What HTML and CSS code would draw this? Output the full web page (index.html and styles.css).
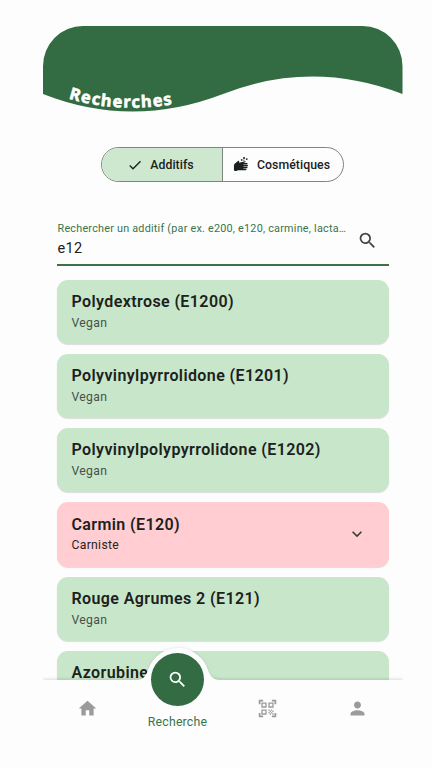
FILE: index.html
```html
<!DOCTYPE html>
<html lang="fr">
<head>
<meta charset="utf-8">
<title>Recherches</title>
<link rel="stylesheet" href="styles.css">
</head>
<body>
<main class="phone">
  <svg class="header" viewBox="0 0 360 94" role="img" aria-label="Recherches">
    <path class="wave" d="M0 68V40A40 40 0 0 1 40 0H319.500A40 40 0 0 1 359.500 40V68Q269 33 180 68Q89 103 0 68Z"/>
    <path id="title-curve" fill="none" d="M25.500 72.500Q77 88.500 140 76.500"/>
    <text class="title" textLength="105"><textPath href="#title-curve">Recherches</textPath></text>
  </svg>

  <div class="segments">
    <button class="segment selected">
      <svg class="check" viewBox="0 0 24 24"><path d="M9 16.170 4.830 12l-1.420 1.410L9 19 21 7l-1.410-1.410z"/></svg>
      <span>Additifs</span>
    </button>
    <button class="segment">
      <svg class="hands" viewBox="0 0 18 18"><path d="M1.800 8.100 5.300 5.300Q6.500 4.500 6.600 6L6.400 7.100 12.700 5.500Q14 5.500 13.200 6.700L10.800 7.500H15Q16.200 8.100 15 8.900H11V9.400H15.500Q16.600 10.100 15.500 10.900H11V11.400H15Q16 12.100 15 12.900H11V13.400H13.800Q14.800 14.200 13.800 15H5.500Q4 15.400 3.200 16H1.800Q1 15.600 1 14.500V10Q1 8.700 1.800 8.100Z"/><circle cx="11.700" cy="2.200" r="1.100"/><circle cx="9.200" cy="4.200" r=".9"/><circle cx="14.500" cy="3.300" r="1"/><circle cx="11.500" cy="4.400" r=".6"/></svg>
      <span>Cosmétiques</span>
    </button>
  </div>

  <label class="search">
    <span class="field">
      <span class="hint">Rechercher un additif (par ex. e200, e120, carmine, lacta…</span>
      <span class="value">e12</span>
    </span>
    <svg class="search-icon" viewBox="0 0 24 24"><path d="M15.500 14h-.79l-.28-.27A6.471 6.471 0 0 0 16 9.500 6.500 6.500 0 1 0 9.500 16c1.610 0 3.090-.59 4.230-1.570l.27.28v.79l5 4.990L20.490 19zm-6 0C7.010 14 5 11.990 5 9.500S7.010 5 9.500 5 14 7.010 14 9.500 11.990 14 9.500 14z"/></svg>
  </label>

  <section class="list">
    <article class="card"><h2>Polydextrose (E1200)</h2><p>Vegan</p></article>
    <article class="card"><h2>Polyvinylpyrrolidone (E1201)</h2><p>Vegan</p></article>
    <article class="card"><h2>Polyvinylpolypyrrolidone (E1202)</h2><p>Vegan</p></article>
    <article class="card carnist">
      <div><h2>Carmin (E120)</h2><p>Carniste</p></div>
      <svg class="chevron" viewBox="0 0 24 24"><path d="M7.410 8.590 12 13.170l4.590-4.580L18 10l-6 6-6-6z"/></svg>
    </article>
    <article class="card"><h2>Rouge Agrumes 2 (E121)</h2><p>Vegan</p></article>
    <article class="card"><h2>Azorubine</h2></article>
  </section>

  <nav class="nav">
    <svg class="notch" viewBox="0 0 100 37"><path d="M8 35C15 35 18 31 20 25A31.500 31.500 0 0 1 80 25C82 31 85 35 92 35V36H8Z"/></svg>
    <a class="tab"><svg viewBox="0 0 24 24"><path d="M10 20v-6h4v6h5v-8h3L12 3 2 12h3v8z"/></svg></a>
    <a class="tab active">
      <span class="fab"><svg viewBox="0 0 24 24"><path d="M15.500 14h-.79l-.28-.27A6.471 6.471 0 0 0 16 9.500 6.500 6.500 0 1 0 9.500 16c1.610 0 3.090-.59 4.230-1.570l.27.28v.79l5 4.990L20.490 19zm-6 0C7.010 14 5 11.990 5 9.500S7.010 5 9.500 5 14 7.010 14 9.500 11.990 14 9.500 14z"/></svg></span>
      <span class="tab-label">Recherche</span>
    </a>
    <a class="tab"><svg viewBox="0 0 24 24"><path d="M9.500 6.500v3h-3v-3h3M11 5H5v6h6V5zM9.500 14.500v3h-3v-3h3M11 13H5v6h6v-6zM17.500 6.500v3h-3v-3h3M19 5h-6v6h6V5zM13 13h1.500v1.500H13zM14.500 14.500H16V16h-1.500zM16 13h1.500v1.500H16zM13 16h1.500v1.500H13zM14.500 17.500H16V19h-1.500zM16 16h1.500v1.500H16zM17.500 14.500H19V16h-1.500zM17.500 17.500H19V19h-1.500zM22 7h-2V4h-3V2h5zM22 22v-5h-2v3h-3v2zM2 22h5v-2H4v-3H2zM2 2v5h2V4h3V2z"/></svg></a>
    <a class="tab"><svg viewBox="0 0 24 24"><path d="M12 12c2.210 0 4-1.790 4-4s-1.790-4-4-4-4 1.790-4 4 1.790 4 4 4zm0 2c-2.670 0-8 1.340-8 4v2h16v-2c0-2.660-5.330-4-8-4z"/></svg></a>
  </nav>
</main>
</body>
</html>
```
FILE: styles.css
```css
* { box-sizing: border-box; }
body {
  margin: 0;
  background: #fdfdfd;
  color: #1b211c;
  font-family: Roboto, sans-serif;
}
.phone {
  display: flex;
  flex-direction: column;
  width: 360px;
  height: 768px;
  margin-left: 43px;
  padding-top: 26px;
  overflow: hidden;
}
.header { display: block; flex: none; width: 360px; height: 94px; }
.wave { fill: #336b42; }
.title {
  fill: #fff;
  stroke: #fff;
  stroke-width: .6px;
  stroke-linejoin: round;
  font: 700 16.500px "Noto Sans", sans-serif;
}
.segments {
  display: flex;
  flex: none;
  width: 243px;
  height: 35px;
  margin: 27px 0 0 58px;
  border: 1px solid #7d857e;
  border-radius: 18px;
  overflow: hidden;
}
.segment {
  display: flex;
  flex: 1;
  align-items: center;
  justify-content: center;
  gap: 7px;
  padding: 0 3px 0 0;
  border: 0;
  background: none;
  color: #1b211c;
  font: 500 12.300px Roboto, sans-serif;
  letter-spacing: .06px;
}
.segment.selected { background: #cee8d0; border-right: 1px solid #7d857e; }
.segment svg { fill: #1b211c; }
.check { width: 16px; height: 16px; }
.hands { width: 17px; height: 17px; }
.search {
  display: flex;
  flex: none;
  width: 332px;
  height: 51px;
  margin: 33px 0 0 14px;
  border-bottom: 2px solid #397449;
}
.field { width: 292px; padding: 7px 0 0 .5px; }
.hint, .value { display: block; }
.hint {
  color: #397449;
  font-size: 10.800px;
  line-height: 14px;
  letter-spacing: .23px;
  white-space: nowrap;
}
.value { margin-top: 4px; font-size: 14.500px; line-height: 18px; letter-spacing: .3px; }
.search-icon { width: 21px; height: 21px; margin: 15px 0 0 7.500px; fill: #404941; }
.list {
  display: flex;
  flex: none;
  flex-direction: column;
  gap: 10px;
  height: 400px;
  padding: 0 14px;
  margin-top: 14px;
  overflow: hidden;
}
.card {
  flex: none;
  width: 332px;
  height: 64px;
  padding: 12px 14.500px;
  border-radius: 11px;
  background: #c8e6c9;
  box-shadow: 0 1px 1px #0002;
}
.card h2 { margin: 0; font-size: 16px; font-weight: 600; line-height: 19px; letter-spacing: .4px; }
.card p { margin: 4px 0 0; color: #49514a; font-size: 12.200px; line-height: 17px; letter-spacing: .3px; }
.card.carnist {
  display: flex;
  justify-content: space-between;
  height: 65px;
  padding-top: 13px;
  background: #ffcdd2;
}
.carnist p { margin-top: 3px; color: #1f2520; }
.chevron { width: 20px; height: 20px; margin: 9px 8px 0 0; fill: #354037; }
.nav {
  position: relative;
  display: flex;
  flex: none;
  height: 88px;
  background: #fdfdfd;
  box-shadow: 0 -1px 3px #0002;
}
.notch {
  position: absolute;
  top: -35px;
  left: 85px;
  width: 100px;
  height: 37px;
  fill: #fdfdfd;
  filter: drop-shadow(0 -1px 1px #0001);
}
.tab { position: relative; left: -.5px; display: flex; flex: 1; flex-direction: column; align-items: center; padding-top: 18px; }
.tab svg { width: 21px; height: 21px; fill: #9b9b9b; }
.tab.active { padding: 0; }
.fab {
  display: flex;
  flex: none;
  align-items: center;
  justify-content: center;
  width: 53px;
  height: 53px;
  margin-top: -27px;
  border-radius: 50%;
  background: #336b42;
}
.tab .fab svg { fill: #fff; }
.tab-label { margin-top: 8.500px; color: #397449; font-size: 12.300px; line-height: 15px; letter-spacing: .2px; }
```
